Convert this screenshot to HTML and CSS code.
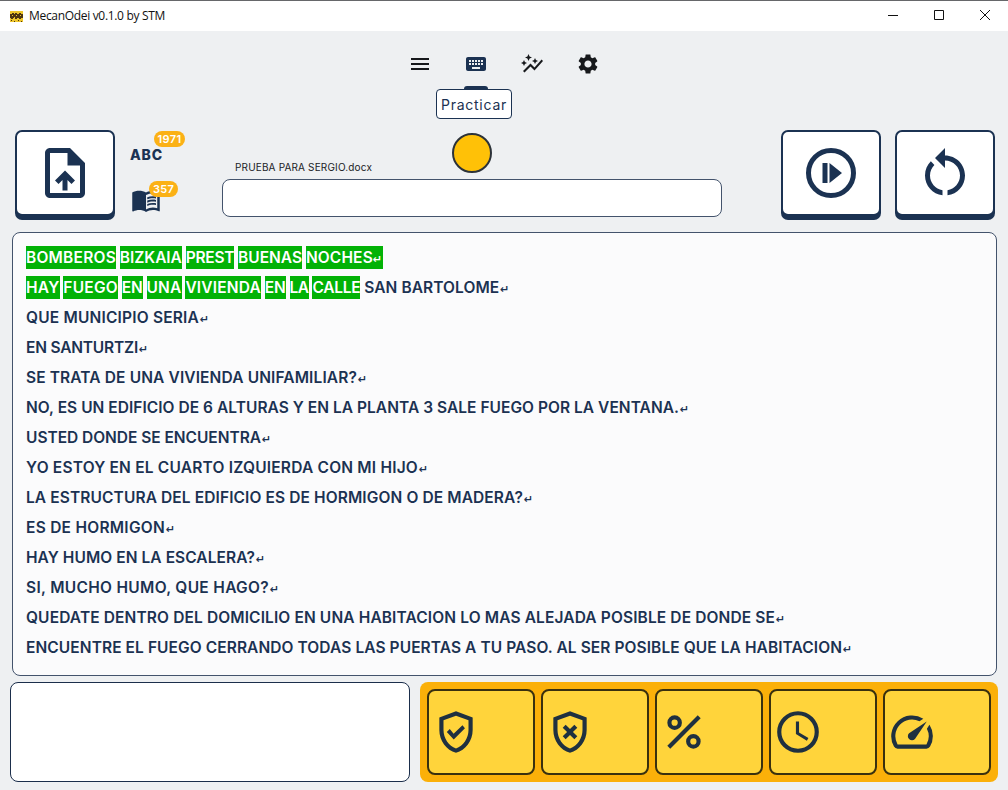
FILE: index.html
```html
<!DOCTYPE html>
<html lang="es">
<head>
<meta charset="utf-8">
<title>MecanOdei</title>
<link rel="stylesheet" href="styles.css">
</head>
<body>
<header class="titlebar">
  <svg class="app-icon" viewBox="0 0 13 11"><path fill="#edc52b" d="M0 0h13v11H0z"/><path fill="#4e3510" d="M0 3h2V2h2v1h1V2h2v1h2V2h2v1h2v4h-2v1H9V7H7v1H5V7H3v1H1V7H0z"/><path fill="#edc52b" d="M2 4h1v1H2zM6 4h1v1H6zM10 4h1v1h-1zM4 6h1v1H4z"/><path fill="#4e3510" d="M1 9h1v1H1zM4 10h1v1H4zM8 9h1v1H8zM11 10h1v1h-1z"/></svg>
  <span class="fit app-title" data-w="136">MecanOdei v0.1.0 by STM</span>
  <div class="window-controls">
    <svg viewBox="0 0 12 12"><path d="M1 5.5h10"/></svg>
    <svg viewBox="0 0 12 12"><path d="M1.5 .5h9v9h-9z"/></svg>
    <svg viewBox="0 0 12 12"><path d="M1 0l10 10M11 0L1 10"/></svg>
  </div>
</header>

<nav class="nav">
  <svg viewBox="0 0 24 24"><path d="M3 18h18v-2H3v2zm0-5h18v-2H3v2zm0-7v2h18V6H3z"/></svg>
  <div class="active-item">
    <svg viewBox="0 0 24 24"><path d="M20 5H4c-1.1 0-1.99.9-1.99 2L2 17c0 1.1.9 2 2 2h16c1.1 0 2-.9 2-2V7c0-1.1-.9-2-2-2zm-9 3h2v2h-2V8zm0 3h2v2h-2v-2zM8 8h2v2H8V8zm0 3h2v2H8v-2zm-1 2H5v-2h2v2zm0-3H5V8h2v2zm9 7H8v-2h8v2zm0-4h-2v-2h2v2zm0-3h-2V8h2v2zm3 3h-2v-2h2v2zm0-3h-2V8h2v2z"/></svg>
    <span class="indicator"></span>
    <div class="tooltip"><span class="fit" data-w="66">Practicar</span></div>
  </div>
  <svg viewBox="0 0 24 24"><path d="M14.06 9.94L12 9l2.06-.94L15 6l.94 2.06L18 9l-2.06.94L15 12l-.94-2.06zM4 14l.94-2.06L7 11l-2.06-.94L4 8l-.94 2.06L1 11l2.06.94L4 14zm4.5-5l1.09-2.41L12 5.5 9.59 4.41 8.5 2 7.41 4.41 5 5.5l2.41 1.09L8.5 9zm-4 11.5l6-6.01 4 4L23 8.93l-1.41-1.41-7.09 7.97-4-4L3 19l1.5 1.5z"/></svg>
  <svg viewBox="0 0 24 24"><path d="M19.14 12.94c.04-.3.06-.61.06-.94 0-.32-.02-.64-.07-.94l2.03-1.58c.18-.14.23-.41.12-.61l-1.92-3.32c-.12-.22-.37-.29-.59-.22l-2.39.96c-.5-.38-1.03-.7-1.62-.94l-.36-2.54c-.04-.24-.24-.41-.48-.41h-3.84c-.24 0-.43.17-.47.41l-.36 2.54c-.59.24-1.13.57-1.62.94l-2.39-.96c-.22-.08-.47 0-.59.22L2.74 8.87c-.12.21-.08.47.12.61l2.03 1.58c-.05.3-.09.63-.09.94s.02.64.07.94l-2.03 1.58c-.18.14-.23.41-.12.61l1.92 3.32c.12.22.37.29.59.22l2.39-.96c.5.38 1.03.7 1.62.94l.36 2.54c.05.24.24.41.48.41h3.84c.24 0 .44-.17.47-.41l.36-2.54c.59-.24 1.13-.56 1.62-.94l2.39.96c.22.08.47 0 .59-.22l1.92-3.32c.12-.22.07-.47-.12-.61l-2.01-1.58zM12 15.6c-1.98 0-3.6-1.62-3.6-3.6s1.62-3.6 3.6-3.6 3.6 1.62 3.6 3.6-1.62 3.6-3.6 3.6z"/></svg>
</nav>

<section class="toolbar">
  <button class="key"><svg viewBox="0 0 24 24"><path d="M14 2H6c-1.1 0-1.99.9-1.99 2L4 20c0 1.1.89 2 1.99 2H18c1.1 0 2-.9 2-2V8l-6-6zm4 18H6V4h7v5h5v11zM8 15.01l1.41 1.41L11 14.84V19h2v-4.16l1.59 1.59L16 15.01 12.01 11 8 15.01z"/></svg></button>
  <div class="stats">
    <div class="stat"><span class="fit abc" data-w="33">ABC</span><span class="badge badge-chars"><span class="fit" data-w="24">1971</span></span></div>
    <div class="stat"><svg viewBox="0 0 24 24"><path d="M21 5c-1.11-.35-2.33-.5-3.5-.5-1.95 0-4.05.4-5.5 1.5-1.45-1.1-3.55-1.5-5.5-1.5S2.45 4.9 1 6v14.65c0 .25.25.5.5.5.1 0 .15-.05.25-.05C3.1 20.45 5.05 20 6.5 20c1.95 0 4.05.4 5.5 1.5 1.35-.85 3.8-1.5 5.5-1.5 1.65 0 3.35.3 4.75 1.05.1.05.15.05.25.05.25 0 .5-.25.5-.5V6c-.6-.45-1.25-.75-2-1zm0 13.5c-1.1-.35-2.3-.5-3.5-.5-1.7 0-4.15.65-5.5 1.5V8c1.35-.85 3.8-1.5 5.5-1.5 1.2 0 2.4.15 3.5.5v11.5z"/><path d="M17.5 10.5c.88 0 1.73.09 2.5.26V9.24c-.79-.15-1.64-.24-2.5-.24-1.7 0-3.24.29-4.5.83v1.66c1.13-.64 2.7-.99 4.5-.99zM13 12.49v1.66c1.13-.64 2.7-.99 4.5-.99.88 0 1.73.09 2.5.26V11.9c-.79-.15-1.64-.24-2.5-.24-1.7 0-3.24.3-4.5.83zM17.5 14.33c-1.7 0-3.24.29-4.5.83v1.66c1.13-.64 2.7-.99 4.5-.99.88 0 1.73.09 2.5.26v-1.52c-.79-.16-1.64-.24-2.5-.24z"/></svg><span class="badge badge-words"><span class="fit" data-w="21">357</span></span></div>
  </div>
  <div class="entry">
    <div class="entry-head"><span class="fit filename" data-w="137">PRUEBA PARA SERGIO.docx</span><span class="status-dot"></span></div>
    <input class="entry-input" type="text">
  </div>
  <div class="actions">
    <button class="key"><svg viewBox="0 0 24 24"><circle cx="12" cy="12" r="9" fill="none" stroke="currentColor" stroke-width="2"/><path d="M8.6 8h2v8h-2zM11.4 8l5 4-5 4z"/></svg></button>
    <button class="key"><svg viewBox="0 0 24 24"><path d="M12 5V2L8 6l4 4V7c3.31 0 6 2.69 6 6 0 2.97-2.17 5.43-5 5.91v2.02c3.95-.49 7-3.85 7-7.93 0-4.42-3.58-8-8-8zm-6 8c0-1.65.67-3.15 1.76-4.24L6.34 7.34C4.9 8.79 4 10.79 4 13c0 4.08 3.05 7.44 7 7.93v-2.02c-2.83-.48-5-2.94-5-5.91z"/></svg></button>
  </div>
</section>

<main class="document">
  <p class="line"><span class="fit done" data-w="90">BOMBEROS</span><span class="fit done" data-w="62">BIZKAIA</span><span class="fit done" data-w="48.5">PREST</span><span class="fit done" data-w="64">BUENAS</span><span class="fit done joined" data-w="67">NOCHES</span><span class="enter done">↵</span></p>
  <p class="line"><span class="fit done" data-w="33.5">HAY</span><span class="fit done" data-w="54.5">FUEGO</span><span class="fit done" data-w="21">EN</span><span class="fit done" data-w="35">UNA</span><span class="fit done" data-w="75.5">VIVIENDA</span><span class="fit done" data-w="21">EN</span><span class="fit done" data-w="19">LA</span><span class="fit done" data-w="48">CALLE</span><span class="fit" data-w="135">SAN BARTOLOME</span><span class="enter">↵</span></p>
  <p class="line"><span class="fit" data-w="173">QUE MUNICIPIO SERIA</span><span class="enter">↵</span></p>
  <p class="line"><span class="fit" data-w="112">EN SANTURTZI</span><span class="enter">↵</span></p>
  <p class="line"><span class="fit" data-w="331">SE TRATA DE UNA VIVIENDA UNIFAMILIAR?</span><span class="enter">↵</span></p>
  <p class="line"><span class="fit" data-w="653">NO, ES UN EDIFICIO DE 6 ALTURAS Y EN LA PLANTA 3 SALE FUEGO POR LA VENTANA.</span><span class="enter">↵</span></p>
  <p class="line"><span class="fit" data-w="235">USTED DONDE SE ENCUENTRA</span><span class="enter">↵</span></p>
  <p class="line"><span class="fit" data-w="392">YO ESTOY EN EL CUARTO IZQUIERDA CON MI HIJO</span><span class="enter">↵</span></p>
  <p class="line"><span class="fit" data-w="497">LA ESTRUCTURA DEL EDIFICIO ES DE HORMIGON O DE MADERA?</span><span class="enter">↵</span></p>
  <p class="line"><span class="fit" data-w="139">ES DE HORMIGON</span><span class="enter">↵</span></p>
  <p class="line"><span class="fit" data-w="229">HAY HUMO EN LA ESCALERA?</span><span class="enter">↵</span></p>
  <p class="line"><span class="fit" data-w="243">SI, MUCHO HUMO, QUE HAGO?</span><span class="enter">↵</span></p>
  <p class="line"><span class="fit" data-w="749">QUEDATE DENTRO DEL DOMICILIO EN UNA HABITACION LO MAS ALEJADA POSIBLE DE DONDE SE</span><span class="enter">↵</span></p>
  <p class="line"><span class="fit" data-w="816">ENCUENTRE EL FUEGO CERRANDO TODAS LAS PUERTAS A TU PASO. AL SER POSIBLE QUE LA HABITACION</span><span class="enter">↵</span></p>
</main>

<footer class="footer">
  <div class="message"></div>
  <div class="metrics">
    <div class="metric"><svg viewBox="0 0 24 24"><path d="M12 2L4 5v6.09c0 5.05 3.41 9.76 8 10.91 4.59-1.15 8-5.86 8-10.91V5l-8-3zm6 9.09c0 4-2.55 7.7-6 8.83-3.45-1.13-6-4.82-6-8.83v-4.7l6-2.25 6 2.25v4.7z"/><path d="M9.01 10.59L7.6 12l3.3 3.54 5.4-5.36-1.21-1.41-4.24 4.04z"/></svg></div>
    <div class="metric"><svg viewBox="0 0 24 24"><path d="M12 2L4 5v6.09c0 5.05 3.41 9.76 8 10.91 4.59-1.15 8-5.86 8-10.91V5l-8-3zm6 9.09c0 4-2.55 7.7-6 8.83-3.45-1.13-6-4.82-6-8.83v-4.7l6-2.25 6 2.25v4.7z"/><path d="M9.91 8.5L8.5 9.91 10.59 12 8.5 14.09l1.41 1.41L12 13.42l2.09 2.08 1.41-1.41L13.42 12l2.08-2.09-1.41-1.41L12 10.59z"/></svg></div>
    <div class="metric"><svg viewBox="0 0 24 24"><g fill="none" stroke="currentColor" stroke-width="2"><circle cx="7.5" cy="7.5" r="2.5"/><circle cx="16.5" cy="16.5" r="2.5"/><path d="M4.7 19.3L19.3 4.7"/></g></svg></div>
    <div class="metric"><svg viewBox="0 0 24 24"><circle cx="12" cy="12" r="9" fill="none" stroke="currentColor" stroke-width="2"/><path d="M12.5 7H11v6l5.25 3.15.75-1.23-4.5-2.67z"/></svg></div>
    <div class="metric"><svg viewBox="0 0 24 24"><path d="M20.38 8.57l-1.23 1.85a8 8 0 0 1-.22 7.58H5.07A8 8 0 0 1 15.58 6.85l1.85-1.23A10 10 0 0 0 3.35 19a2 2 0 0 0 1.72 1h13.85a2 2 0 0 0 1.74-1 10 10 0 0 0-.27-10.44zm-9.79 6.84a2 2 0 0 0 2.83 0l5.66-8.49-8.49 5.66a2 2 0 0 0 0 2.83z"/></svg></div>
  </div>
</footer>
<script src="fit.js"></script>
</body>
</html>
```

FILE: styles.css
```css
* { box-sizing: border-box; }
body {
  margin: 0;
  width: 1008px;
  height: 790px;
  overflow: hidden;
  display: flex;
  flex-direction: column;
  background: #eef0f2;
  color: #1b3252;
  font-family: Inter, "Liberation Sans", sans-serif;
}
svg { display: block; fill: currentColor; flex: none; }
.fit { display: inline-block; white-space: pre; flex: none; }

.titlebar {
  height: 31px;
  flex: none;
  display: flex;
  align-items: center;
  padding: 0 17px 0 10px;
  border-top: 1px solid #66676a;
  background: #fff;
  color: #111;
}
.app-icon { width: 13px; height: 11px; margin-right: 6px; }
.app-title { font: 12px/16px "Open Sans", "Noto Sans", sans-serif; }
.window-controls { margin-left: auto; display: flex; gap: 34px; }
.window-controls svg { width: 12px; height: 12px; fill: none; stroke: #111; stroke-width: 1; }

.nav {
  height: 99px;
  flex: none;
  display: flex;
  justify-content: center;
  gap: 32px;
  padding-top: 21px;
  color: #17191c;
}
.nav svg { width: 24px; height: 24px; }
.active-item { position: relative; width: 24px; color: #1b3252; }
.indicator {
  position: absolute;
  top: 34px;
  left: 0;
  width: 24px;
  height: 4px;
  border-radius: 3px 3px 0 0;
  background: #1b3252;
}
.tooltip {
  position: absolute;
  top: 37px;
  left: -28px;
  width: 76px;
  height: 30px;
  display: flex;
  align-items: center;
  justify-content: center;
  border: 1px solid #1b3252;
  border-radius: 4px;
  background: #fff;
  font-size: 14px;
}

.toolbar { height: 102px; flex: none; display: flex; padding: 0 13px 0 15px; }
.key {
  width: 100px;
  height: 86px;
  display: flex;
  align-items: center;
  justify-content: center;
  padding: 0;
  border: 2px solid #1b3252;
  border-radius: 7px;
  background: #fff;
  box-shadow: 0 4px 0 #1b3252;
  color: #1b3252;
}
.key svg { width: 60px; height: 60px; }
.stats { width: 107px; padding: 9px 0 0 16px; display: grid; grid-template-rows: 30px 30px; gap: 16px; }
.stat { position: relative; width: 31px; display: flex; align-items: center; }
.stat svg { width: 30px; height: 30px; }
.abc { font-size: 14px; font-weight: 800; margin-left: -1px; }
.badge {
  position: absolute;
  height: 16px;
  display: flex;
  align-items: center;
  justify-content: center;
  border-radius: 8px;
  background: #fbb116;
  color: #fff;
  font-size: 11px;
  font-weight: 600;
}
.badge-chars { left: 23px; top: -8px; width: 31px; }
.badge-words { left: 18px; top: -4px; width: 29px; }
.entry { width: 500px; padding-top: 3px; }
.entry-head { height: 46px; display: flex; padding-left: 13px; }
.filename { padding-top: 28px; color: #202226; font-size: 10px; line-height: 13px; }
.status-dot {
  width: 40px;
  height: 40px;
  margin-left: 80px;
  border: 2px solid #2c3239;
  border-radius: 50%;
  background: #ffc107;
}
.entry-input {
  display: block;
  width: 500px;
  height: 38px;
  padding: 0 12px;
  border: 1px solid #43536c;
  border-radius: 8px;
  background: #fff;
  outline: 0;
}
.actions { margin-left: auto; display: flex; gap: 14px; }

.document {
  height: 444px;
  flex: none;
  margin: 0 11.5px;
  padding: 9px 13.5px;
  border: 1px solid #43536c;
  border-radius: 8px;
  background: #fbfbfc;
}
.line {
  display: flex;
  align-items: center;
  gap: 3.85px;
  height: 30px;
  margin: 0;
  font-size: 15.5px;
  line-height: 23px;
  font-weight: 600;
}
.done { background: #02b206; color: #fff; }
.joined { margin-right: -4px; }
.enter {
  width: 10px;
  height: 23px;
  margin-left: -3px;
  font: bold 11px/27px "DejaVu Sans", sans-serif;
}
.enter.done { margin-left: 0; }

.footer { display: flex; gap: 10px; padding: 6px 10px 8px; }
.message { width: 400px; height: 100px; border: 1px solid #1b2e4b; border-radius: 8px; background: #fff; }
.metrics { width: 578px; height: 100px; display: flex; gap: 6px; padding: 7px; border-radius: 8px; background: #fbb009; }
.metric {
  flex: 1;
  display: flex;
  align-items: center;
  padding-left: 2px;
  border: 2px solid #39300f;
  border-radius: 8px;
  background: #ffd43b;
  color: #1f3040;
}
.metric svg { width: 50px; height: 50px; }
```

FILE: fit.js
```js
// Tracks each label so that it fills its data-w width.
document.querySelectorAll('.fit').forEach(function (el) {
  var target = parseFloat(el.dataset.w);
  var natural = el.getBoundingClientRect().width;
  el.style.letterSpacing = (target - natural) / el.textContent.length + 'px';
  el.style.width = target + 'px';
});
```
